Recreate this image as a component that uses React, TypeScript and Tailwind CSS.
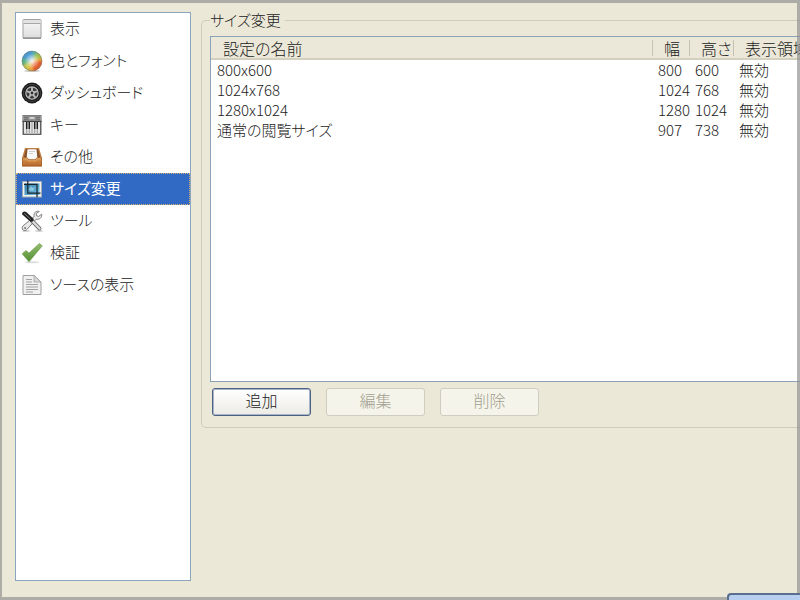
import { ReactNode, useState } from "react";
import clsx from "clsx";

const PageIcon = () => (
  <svg viewBox="0 0 20 20" className="h-5 w-5">
    <defs>
      <linearGradient id="page" x1="0" y1="0" x2="0" y2="1">
        <stop offset="0" stopColor="#fafafa" />
        <stop offset="1" stopColor="#dcdcdc" />
      </linearGradient>
    </defs>
    <rect x="1" y="0.5" width="18" height="18.5" rx="0.5" fill="url(#page)" stroke="#a2a2a2" />
    <path d="M1.5 1h17v3.5h-17z" fill="#e2e2e2" />
    <path d="M1.5 4.5h17" stroke="#a8a8a8" />
    <path d="M1 19.2h18" stroke="#777" strokeWidth="1" />
  </svg>
);

const ColorIcon = () => (
  <svg viewBox="0 0 20 20" className="h-5 w-5 overflow-visible">
    <defs>
      <clipPath id="wheel">
        <circle cx="10" cy="10" r="10.3" />
      </clipPath>
      <radialGradient id="glow">
        <stop offset="0" stopColor="#fff" stopOpacity="0.9" />
        <stop offset="0.35" stopColor="#fff" stopOpacity="0.5" />
        <stop offset="0.75" stopColor="#fff" stopOpacity="0.05" />
        <stop offset="1" stopColor="#444" stopOpacity="0.25" />
      </radialGradient>
      <filter id="soft">
        <feGaussianBlur stdDeviation="1.3" />
      </filter>
    </defs>
    <ellipse cx="10" cy="20" rx="8" ry="1" fill="#ccc" />
    <g clipPath="url(#wheel)">
      <g filter="url(#soft)">
        <path d="M10 10L-3 8V-3h17z" fill="#3f93cf" />
        <path d="M10 10L11 -4l8 4z" fill="#55b08c" />
        <path d="M10 10L18 -3l7 11z" fill="#a4bd3a" />
        <path d="M10 10L24 6v6z" fill="#ef9a2c" />
        <path d="M10 10L24 10v13H9z" fill="#e2511f" />
        <path d="M10 10L12 24H2z" fill="#f09a32" />
        <path d="M10 10L5 24l-9-5V14z" fill="#c9c441" />
        <path d="M10 10L-4 17V6z" fill="#4fae79" />
      </g>
      <circle cx="10" cy="10" r="10.3" fill="url(#glow)" />
    </g>
    <circle cx="10" cy="10" r="9.8" fill="none" stroke="#6d8b86" strokeOpacity="0.5" strokeWidth="0.8" />
  </svg>
);

const WheelIcon = () => (
  <svg viewBox="0 0 20 20" className="h-5 w-5 overflow-visible">
    <circle cx="10" cy="10" r="10.4" fill="#1b1b1b" />
    <circle cx="10" cy="10" r="8.6" fill="none" stroke="#484848" strokeWidth="0.8" />
    <circle cx="10" cy="10" r="6.2" fill="#3a3a3a" stroke="#bdbdbd" strokeWidth="1.2" />
    <g stroke="#b4b4b4" strokeWidth="2">
      <path d="M10 10V4" />
      <path d="M10 10L4.3 8.1" />
      <path d="M10 10L15.7 8.1" />
      <path d="M10 10L6.5 14.9" />
      <path d="M10 10L13.5 14.9" />
    </g>
    <circle cx="10" cy="10" r="2.6" fill="#c4c4c4" />
    <circle cx="10" cy="10" r="1.4" fill="#333" />
  </svg>
);

const KeyboardIcon = () => (
  <svg viewBox="0 0 20 20" className="h-5 w-5">
    <rect x="0.5" y="0" width="19" height="20" fill="#626262" />
    <rect x="1" y="0.5" width="18" height="5.5" fill="#999" />
    <path d="M2 2.2h4M2 4.2h4M14 2.2h4M14 4.2h4" stroke="#555" strokeWidth="0.8" />
    <rect x="7" y="1.3" width="6" height="3.4" fill="#cfcfcf" stroke="#666" strokeWidth="0.5" />
    <path d="M0.5 6.3h19" stroke="#3a3a3a" />
    <rect x="2" y="7" width="16" height="11" fill="#e6e6e6" />
    <path d="M4.7 7v11M7.3 7v11M10 7v11M12.7 7v11M15.3 7v11" stroke="#777" strokeWidth="0.7" />
    <path d="M4.7 7v7M7.3 7v7M12.7 7v7M15.3 7v7" stroke="#222" strokeWidth="1.5" />
    <path d="M2 18.5h16" stroke="#bbb" />
  </svg>
);

const TrayIcon = () => (
  <svg viewBox="0 0 20 20" className="h-5 w-5">
    <defs>
      <linearGradient id="wood" x1="0" y1="0" x2="0" y2="1">
        <stop offset="0" stopColor="#d9954f" />
        <stop offset="1" stopColor="#b4662a" />
      </linearGradient>
    </defs>
    <path d="M3 1h14l3 10v8.5H0V11z" fill="#c08044" />
    <path d="M4 2h12l2.3 8.5H1.7z" fill="#8a5228" />
    <path d="M5.5 2.2h9l1 10h-11z" fill="#fbfbfb" />
    <path d="M7 4.5h6M6.8 6.5h4" stroke="#c4c4c4" strokeWidth="0.8" />
    <path d="M0.5 11h5l1 2h7l1-2h5v8H0.5z" fill="url(#wood)" stroke="#a1602a" strokeWidth="0.7" />
    <path d="M1.2 11.8h3.8l1 2h8l1-2h3.8" stroke="#efb476" strokeWidth="0.8" fill="none" />
  </svg>
);

const CropIcon = () => (
  <svg viewBox="0 0 20 20" className="h-5 w-5">
    <defs>
      <linearGradient id="photo" x1="0" y1="0" x2="1" y2="1">
        <stop offset="0" stopColor="#2f79a8" />
        <stop offset="1" stopColor="#79c5e4" />
      </linearGradient>
    </defs>
    <rect x="0.5" y="2.5" width="19" height="15.5" fill="#f3f3f0" stroke="#9ea9b5" />
    <rect x="2.5" y="4.5" width="15" height="11.5" fill="url(#photo)" />
    <path d="M6 11l3-4 2 2 2-1-2 4z" fill="#b8e3ef" opacity="0.6" />
    <path d="M5.8 1.5v12.7h12.7M2 5.3h13v13" fill="none" stroke="#17242e" strokeWidth="1.2" />
  </svg>
);

const ToolsIcon = () => (
  <svg viewBox="0 0 20 20" className="h-5 w-5 overflow-visible">
    <ellipse cx="4" cy="20" rx="4" ry="1" fill="#d5d5d5" />
    <ellipse cx="17" cy="20" rx="4" ry="1" fill="#d5d5d5" />
    <path
      d="M19.6 3.2l-3.1 2.3-2-0.9-0.2-2.3 3-1.8c-2.6-1-5.4 0.7-5.3 3.7l0.2 1.4L1 14.9c-1.3 1.2-1 3.2 0.2 4.1 1.2 0.9 2.8 0.6 3.7-0.5l9.3-10.3c3.3 0.8 6.1-1.8 5.4-5z"
      fill="#e9e9e9"
      stroke="#707070"
      strokeWidth="0.9"
    />
    <circle cx="3.1" cy="16.9" r="1" fill="#777" />
    <path d="M10 9.8l7.5 7.7" stroke="#6c6c6c" strokeWidth="4" strokeLinecap="round" />
    <path d="M10 9.8l7.6 7.8" stroke="#dedede" strokeWidth="2.2" strokeLinecap="round" />
    <path d="M0 3.2C0.1 1 2.3-0.2 4.2 1.1l6.8 6.1c1 1 0.7 2.6-0.4 3.3-1 0.7-2.3 0.3-3-0.4z" fill="#222" />
    <path d="M2.3 2.3l6.4 6" stroke="#828282" strokeWidth="1" />
  </svg>
);

const CheckIcon = () => (
  <svg viewBox="0 0 20 20" className="h-5 w-5 overflow-visible">
    <defs>
      <linearGradient id="check" x1="0" y1="0" x2="0" y2="1">
        <stop offset="0" stopColor="#93bd70" />
        <stop offset="1" stopColor="#548f32" />
      </linearGradient>
    </defs>
    <ellipse cx="10" cy="19.2" rx="7" ry="1" fill="#ddd" />
    <path d="M0.2 10.8l3.8-3.2 3 2.5L17.3 0.6l3 2.2L7 18.8z" fill="url(#check)" stroke="#719f51" strokeWidth="0.7" />
  </svg>
);

const SourceIcon = () => (
  <svg viewBox="0 0 20 20" className="h-5 w-5">
    <path d="M1 0.5h11l7 6.5v12.5H1z" fill="#f0f0f0" stroke="#a0a0a0" />
    <path d="M12 0.5V7h7z" fill="#d9d9d9" stroke="#a0a0a0" strokeWidth="0.8" />
    <path d="M4 4.5h6M4 7h6M4 9.5h12M4 12h12M4 14.5h12M4 17h7" stroke="#999" strokeWidth="0.9" />
  </svg>
);

const categories: { label: string; icon: ReactNode }[] = [
  { label: "表示", icon: <PageIcon /> },
  { label: "色とフォント", icon: <ColorIcon /> },
  { label: "ダッシュボード", icon: <WheelIcon /> },
  { label: "キー", icon: <KeyboardIcon /> },
  { label: "その他", icon: <TrayIcon /> },
  { label: "サイズ変更", icon: <CropIcon /> },
  { label: "ツール", icon: <ToolsIcon /> },
  { label: "検証", icon: <CheckIcon /> },
  { label: "ソースの表示", icon: <SourceIcon /> },
];

const sizes = [
  { name: "800x600", width: 800, height: 600, viewport: "無効" },
  { name: "1024x768", width: 1024, height: 768, viewport: "無効" },
  { name: "1280x1024", width: 1280, height: 1024, viewport: "無効" },
  { name: "通常の閲覧サイズ", width: 907, height: 738, viewport: "無効" },
];

const HeaderCell = ({ children, divider = true }: { children: ReactNode; divider?: boolean }) => (
  <th scope="col" className="h-[22px] p-0 text-left text-[16px] font-light">
    <div
      className={clsx(
        "h-4 whitespace-nowrap border-l pl-[11px] leading-4",
        divider ? "border-[#c5c2b2]" : "border-transparent"
      )}
    >
      {children}
    </div>
  </th>
);

const ActionButton = ({ label, disabled = false }: { label: string; disabled?: boolean }) => (
  <button
    disabled={disabled}
    className={clsx(
      "h-7 w-[99px] rounded-[3px] border pb-1 text-[16px] leading-5",
      disabled
        ? "border-[#cfcdbf] bg-[#f5f4ea] text-[#a19f90]"
        : "border-[#4c6285] bg-gradient-to-b from-white to-[#ecebe5] shadow-[inset_0_0_0_1px_#a9b4c6]"
    )}
  >
    {label}
  </button>
);

export default function App() {
  const [selected, setSelected] = useState("サイズ変更");

  return (
    <div className="relative flex h-screen flex-col overflow-hidden bg-[#ebe8d8] font-['Liberation_Sans_Narrow','Noto_Sans_CJK_JP',sans-serif] text-[15px] font-light text-[#222] [font-feature-settings:'palt']">
      <div className="flex min-h-0 flex-1 gap-[10px] pt-3 pb-3 pl-[15px]">
        <nav className="w-[176px] shrink-0 border border-[#8ba5be] bg-white">
          {categories.map(({ label, icon }) => (
            <button
              key={label}
              onClick={() => setSelected(label)}
              className={clsx(
                "flex h-8 w-full items-center gap-2 pl-[6px] leading-5",
                selected === label &&
                  "bg-[#316ac5] font-normal text-white outline-1 -outline-offset-1 outline-dotted outline-[#d8b070]"
              )}
            >
              {icon}
              <span className="pb-[2px]">{label}</span>
            </button>
          ))}
        </nav>

        <main className="min-w-0 flex-1">
          <fieldset className="min-w-0 rounded-l-[5px] border border-r-0 border-[#cfccba] pb-[11px] pl-2">
            <legend className="pr-1 leading-4">サイズ変更</legend>
            <div className="mt-2 h-[346px] overflow-hidden border border-r-0 border-[#8aa3b8] bg-white">
              <table className="w-full table-fixed border-collapse">
                <colgroup>
                  <col />
                  <col className="w-[37px]" />
                  <col className="w-[44px]" />
                  <col className="w-[67px]" />
                </colgroup>
                <thead className="border-b-2 border-[#d3d0c0] bg-[#ebe8d9]">
                  <tr>
                    <HeaderCell divider={false}>設定の名前</HeaderCell>
                    <HeaderCell>幅</HeaderCell>
                    <HeaderCell>高さ</HeaderCell>
                    <HeaderCell>表示領域</HeaderCell>
                  </tr>
                </thead>
                <tbody>
                  {sizes.map((size) => (
                    <tr key={size.name} className="h-5 whitespace-nowrap leading-5">
                      <td className="p-0 pl-[6px]">{size.name}</td>
                      <td className="p-0 pl-[6px]">{size.width}</td>
                      <td className="p-0 pl-[6px]">{size.height}</td>
                      <td className="p-0 pl-[6px]">{size.viewport}</td>
                    </tr>
                  ))}
                </tbody>
              </table>
            </div>
            <div className="mt-[6px] flex gap-[15px] pl-[2px]">
              <ActionButton label="追加" />
              <ActionButton label="編集" disabled />
              <ActionButton label="削除" disabled />
            </div>
          </fieldset>
        </main>
      </div>

      <div className="pointer-events-none absolute inset-0 border-[3px] border-l-2 border-[#8c8c8ca6]" />

      <footer className="relative flex h-[7px] shrink-0 justify-end">
        <button
          aria-label="OK"
          className="h-7 w-[73px] rounded-tl-[4px] border-2 border-r-0 border-[#5b6f8f] bg-[#b9cff0]"
        />
      </footer>
    </div>
  );
}
